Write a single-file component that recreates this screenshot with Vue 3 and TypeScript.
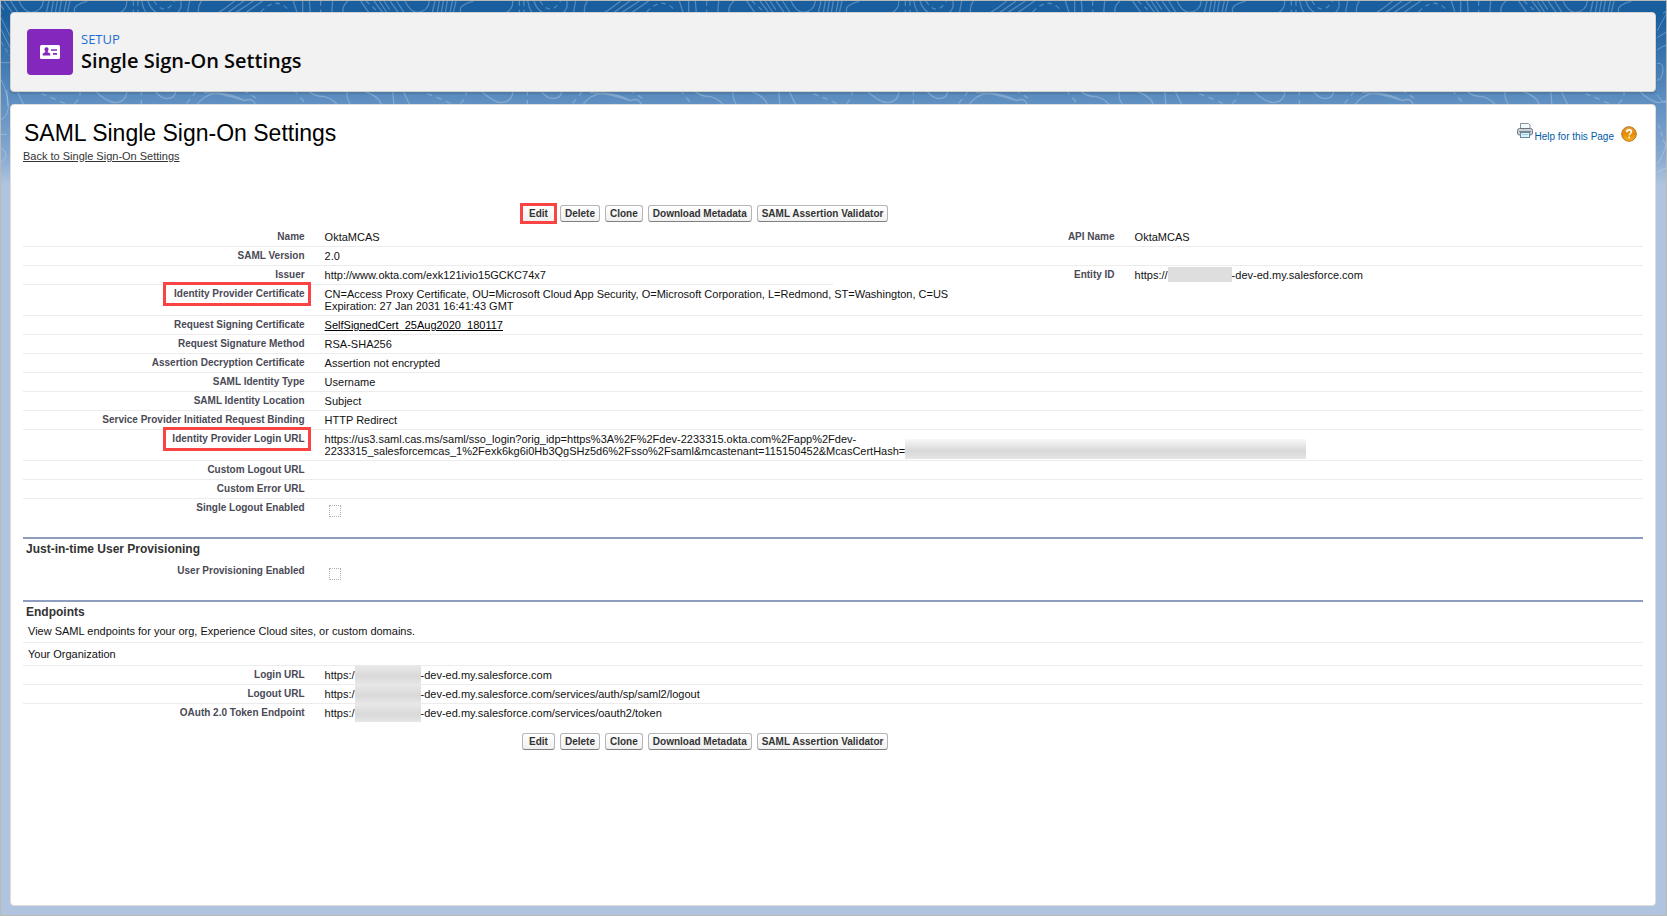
<script setup lang="ts">
interface Field {
  label: string
  text?: string
  extra?: string
  link?: boolean
  hash?: boolean
  check?: boolean
  marked?: boolean
  id?: string
  side?: { label: string; text: string; tail?: string }
  split?: boolean
}

const actions = ['Edit', 'Delete', 'Clone', 'Download Metadata', 'SAML Assertion Validator']

const settings: Field[] = [
  { label: 'Name', text: 'OktaMCAS', side: { label: 'API Name', text: 'OktaMCAS' } },
  { label: 'SAML Version', text: '2.0' },
  {
    label: 'Issuer',
    text: 'http://www.okta.com/exk121ivio15GCKC74x7',
    side: { label: 'Entity ID', text: 'https://', tail: '-dev-ed.my.salesforce.com' },
    split: true,
  },
  {
    label: 'Identity Provider Certificate',
    text: 'CN=Access Proxy Certificate, OU=Microsoft Cloud App Security, O=Microsoft Corporation, L=Redmond, ST=Washington, C=US',
    extra: 'Expiration: 27 Jan 2031 16:41:43 GMT',
    marked: true,
  },
  { label: 'Request Signing Certificate', text: 'SelfSignedCert_25Aug2020_180117', link: true },
  { label: 'Request Signature Method', text: 'RSA-SHA256' },
  { label: 'Assertion Decryption Certificate', text: 'Assertion not encrypted' },
  { label: 'SAML Identity Type', text: 'Username' },
  { label: 'SAML Identity Location', text: 'Subject' },
  { label: 'Service Provider Initiated Request Binding', text: 'HTTP Redirect' },
  {
    label: 'Identity Provider Login URL',
    text: 'https://us3.saml.cas.ms/saml/sso_login?orig_idp=https%3A%2F%2Fdev-2233315.okta.com%2Fapp%2Fdev-',
    extra: '2233315_salesforcemcas_1%2Fexk6kg6i0Hb3QgSHz5d6%2Fsso%2Fsaml&mcastenant=115150452&McasCertHash=',
    hash: true,
    marked: true,
  },
  { label: 'Custom Logout URL' },
  { label: 'Custom Error URL' },
  { label: 'Single Logout Enabled', check: true, id: 'single-logout' },
]

const endpoints = [
  { label: 'Login URL', tail: '-dev-ed.my.salesforce.com' },
  { label: 'Logout URL', tail: '-dev-ed.my.salesforce.com/services/auth/sp/saml2/logout' },
  { label: 'OAuth 2.0 Token Endpoint', tail: '-dev-ed.my.salesforce.com/services/oauth2/token' },
]
</script>

<template>
  <div class="page">
    <svg class="contours" width="100%" height="182" aria-hidden="true">
      <defs>
        <pattern id="contour" x="3" y="-1" width="386" height="182" patternUnits="userSpaceOnUse">
          <g transform="scale(.33333)" fill="none" stroke="#cfe0f2" stroke-width="4">
            <path d="M0 3L25 38M20 3L42 38M45 3Q60 36 82 37Q115 34 118 3M135 3L127 38M148 3L142 38M160 3L154 38M172 3L166 38M187 3L180 38M198 3L190 38M250 4Q200 16 214 40M368 3Q370 28 345 40M413 3Q417 25 427 40M432 3Q440 30 462 40M530 3Q536 25 518 40M557 3L550 40M592 3Q580 20 584 40M692 3Q665 25 640 40M720 3L668 40M748 3L692 40M776 3L722 40M868 3L880 40M896 3V40M916 3L919 40M986 3L983 40M1032 3Q1012 20 1018 40M1070 3L1096 40M1110 3L1138 40M1126 3L1150 40M1140 3L1158 30" />
            <path d="M388 3V40M402 3V40M450 3Q480 52 512 3M770 36Q815 -12 852 28M950 3V40M1086 3L1120 34" stroke-dasharray="14 12" />
            <path d="M8 270L12 320M38 270L62 320M270 270Q310 308 335 308Q370 304 368 270M450 270Q470 296 490 296Q516 294 515 270M574 320Q600 282 640 279Q690 284 722 302Q748 290 756 320M600 278Q640 276 722 302M910 270Q930 290 962 290Q990 298 1004 320M1030 270Q1024 298 1045 320M1070 270Q1130 288 1133 320" />
            <path d="M84 270L140 292L196 316M228 270Q232 300 200 318M412 270V320M548 310L580 270M718 270L768 302M870 270L912 320" stroke-dasharray="16 14" />
          </g>
        </pattern>
      </defs>
      <rect width="100%" height="182" fill="url(#contour)" />
    </svg>
    <svg class="edge" width="9" height="182" viewBox="0 0 27 546" aria-hidden="true">
      <path d="M0 50L27 105M0 85L27 140M0 185H27M0 235Q22 280 22 320Q18 350 0 355M0 400H18M0 440Q30 460 0 485" />
      <path d="M0 122L27 165" stroke-dasharray="14 10" />
    </svg>
    <svg class="edge east" width="9" height="182" viewBox="0 0 27 546" aria-hidden="true">
      <path d="M0 90L27 40M0 110L27 94M0 147Q15 136 27 133M0 187Q20 184 18 210Q14 238 0 238M0 280Q10 300 27 305M0 488Q20 470 27 425M0 515L27 500" />
      <path d="M4 370L27 440" stroke-dasharray="14 10" />
    </svg>

    <header class="banner">
      <span class="tile">
        <svg width="20" height="14" viewBox="0 0 20 14" aria-hidden="true">
          <rect width="20" height="14" rx="1.6" fill="#fff" />
          <path d="M6.500 2.200c1.300 0 2 .9 2 2.100 0 1-.5 1.600-.8 2.100-.2.500 0 .9.500 1.100 1.300.5 2.100.9 2.100 2v1H2.700v-1c0-1.100.8-1.500 2.100-2 .5-.2.700-.6.500-1.100-.3-.5-.8-1.100-.8-2.100 0-1.200.7-2.100 2-2.100z" fill="#8428bd" />
          <path d="M11 5h6M13 8.800h4" stroke="#8428bd" stroke-width="1.700" />
        </svg>
      </span>
      <div class="heading">
        <p class="eyebrow">SETUP</p>
        <h1>Single Sign-On Settings</h1>
      </div>
    </header>

    <main class="card">
      <div class="top">
        <div>
          <h2>SAML Single Sign-On Settings</h2>
          <a class="back" href="#">Back to Single Sign-On Settings</a>
        </div>
        <div class="help">
          <svg width="16" height="16" viewBox="0 0 16 16" aria-hidden="true">
            <path d="M3.500 6V.5h8L13 2v4" fill="#f4fbff" stroke="#86939f" />
            <rect x=".5" y="5.500" width="15" height="6.500" rx="2" fill="#cdd2d6" stroke="#6c747c" />
            <path d="M2 8.500h12" stroke="#7c858d" />
            <rect x="3.500" y="9.500" width="9" height="5" fill="#d9f2fb" stroke="#6c8798" />
            <path d="M5 11.500h6" stroke="#8fd0e8" />
          </svg>
          <a href="#">Help for this Page</a>
          <svg class="question" width="16" height="16" viewBox="0 0 16 16" aria-hidden="true">
            <defs>
              <linearGradient id="amber" x1="0" y1="0" x2="0" y2="1">
                <stop offset="0" stop-color="#e9a33a" />
                <stop offset=".5" stop-color="#e48a08" />
                <stop offset="1" stop-color="#f8b41c" />
              </linearGradient>
            </defs>
            <circle cx="8" cy="8" r="7.300" fill="url(#amber)" stroke="#b5741c" />
            <path d="M5.800 6.200c0-1.500 1-2.300 2.300-2.300s2.300.8 2.300 2c0 1.500-2.100 1.700-2.100 3.300M8.200 10.700v1.500" fill="none" stroke="#fff" stroke-width="1.600" />
          </svg>
        </div>
      </div>

      <div class="actions">
        <button v-for="a in actions" :key="a" type="button" :class="{ flagged: a === 'Edit' }">{{ a }}</button>
      </div>

      <table>
        <colgroup><col class="lab"><col class="dat"><col class="lab"><col class="dat"></colgroup>
        <tbody>
          <tr v-for="f in settings" :key="f.label" :class="{ last: f.check, split: f.split }">
            <th scope="row">
              <label v-if="f.check" :for="f.id">{{ f.label }}</label>
              <span v-else :class="{ marked: f.marked }">{{ f.label }}</span>
            </th>
            <td :colspan="f.side ? 1 : 3">
              <input v-if="f.check" :id="f.id" type="checkbox">
              <a v-else-if="f.link" href="#">{{ f.text }}</a>
              <template v-else>{{ f.text }}</template>
              <template v-if="f.extra"><br>{{ f.extra }}</template>
              <span v-if="f.hash" class="veil hash"></span>
            </td>
            <template v-if="f.side">
              <th scope="row">{{ f.side.label }}</th>
              <td>{{ f.side.text }}<template v-if="f.side.tail"><span class="veil entity"></span>{{ f.side.tail }}</template></td>
            </template>
          </tr>
        </tbody>
      </table>

      <section>
        <h3>Just-in-time User Provisioning</h3>
        <table>
          <colgroup><col class="lab"><col></colgroup>
          <tbody>
            <tr class="last">
              <th scope="row"><label for="provisioning">User Provisioning Enabled</label></th>
              <td><input id="provisioning" type="checkbox"></td>
            </tr>
          </tbody>
        </table>
      </section>

      <section>
        <h3>Endpoints</h3>
        <p class="intro">View SAML endpoints for your org, Experience Cloud sites, or custom domains.</p>
        <p class="org">Your Organization</p>
        <table>
          <colgroup><col class="lab"><col></colgroup>
          <tbody>
            <tr v-for="e in endpoints" :key="e.label">
              <th scope="row">{{ e.label }}</th>
              <td>https:/<span class="veil host"></span>{{ e.tail }}</td>
            </tr>
          </tbody>
        </table>
      </section>

      <div class="actions foot">
        <button v-for="a in actions" :key="a" type="button">{{ a }}</button>
      </div>
    </main>
  </div>
</template>

<style>
body { background: #b0c4df; }
</style>

<style scoped>
* { box-sizing: border-box; }
.page {
  position: relative;
  min-height: 100vh;
  padding: 11px 10px 9px 9px;
  border: 1px solid #b9b9b5;
  display: flex;
  flex-direction: column;
  gap: 12px;
  background: linear-gradient(#195e9e 0, #195e9e 14px, #5f8fc1 100px, #86a9d1 155px, #b0c4df 184px);
  font: 11px/12px "Liberation Sans", Arial, sans-serif;
  color: #111;
}
.contours, .edge { position: absolute; top: 0; left: 0; opacity: .32; }
.contours { clip-path: inset(0 0 77px 0); }
.edge { fill: none; stroke: #e4eefa; stroke-width: 3; }
.east { left: auto; right: 0; }
h1, h2, h3, p { margin: 0; }
.banner {
  position: relative;
  height: 80px;
  padding: 0 16px;
  border: 1px solid #d4d2d0;
  border-radius: 4px;
  background: #f2f2f2;
  box-shadow: 0 2px 2px rgba(0, 0, 0, .12);
  display: flex;
  align-items: center;
  gap: 8px;
}
.tile {
  width: 46px;
  height: 46px;
  border-radius: 4px;
  background: #8428bd;
  display: grid;
  place-items: center;
}
.heading { padding-bottom: 3px; }
.eyebrow { font: 13px/20px "Open Sans", sans-serif; color: #1b6fd0; }
h1 { font: 600 20px/24px "Open Sans", sans-serif; color: #080707; }
.card {
  position: relative;
  flex: 1;
  padding: 15px 12px;
  border: 1px solid #e0dedc;
  border-radius: 4px;
  background: #fff;
}
.top { display: flex; justify-content: space-between; }
h2 { padding: 0 1px 4px; font: 23px/26px "Liberation Sans", Arial, sans-serif; color: #000; }
.back { color: #333435; }
.help { display: flex; gap: 2px; padding: 3px 6px; }
.help a { margin-top: 8px; font-size: 10px; color: #015ba7; text-decoration: none; }
.question { margin: 3px 0 0 5px; }
.actions { display: flex; gap: 5px; padding-left: 499px; margin-top: 43px; margin-bottom: 6px; }
button {
  min-width: 33px;
  height: 17px;
  padding: 0 4px;
  border: 1px solid #b5b5b5;
  border-bottom-color: #7f7f7f;
  border-radius: 3px;
  background: linear-gradient(#fff, #f0f0f0);
  font: bold 10px/14px "Liberation Sans", Arial, sans-serif;
  color: #333;
}
.flagged { border-radius: 0; outline: 3px solid #fa4343; outline-offset: -1px; }
table { width: 100%; border-collapse: collapse; table-layout: fixed; }
.lab { width: 18%; }
.dat { width: 32%; }
th, td { padding: 3px 10px; border-bottom: 1px solid #ececec; vertical-align: top; }
th { font-size: 10px; text-align: right; color: #4a4a56; }
td { text-align: left; white-space: nowrap; }
td a { color: #000; }
.split > :nth-child(n + 3) { border-bottom: 0; }
.last > * { border-bottom: 0; }
tr:last-child > * { border-bottom: 0; }
.marked { display: inline-block; min-width: 136px; outline: 3px solid #fa4343; outline-offset: 3px; }
input {
  appearance: none;
  display: block;
  width: 12px;
  height: 12px;
  margin: 3px 4px;
  border: 1px dotted #b0b0b0;
}
section { margin-top: 14px; border-top: 2px solid #8e9dbe; }
h3 { padding: 2px 3px 5px; font: bold 12px/16px "Liberation Sans", Arial, sans-serif; color: #333; }
.intro, .org { padding: 0 5px 5px; border-bottom: 1px solid #ececec; }
.org { padding-top: 5px; }
.veil { display: inline-block; vertical-align: top; background: #dedede; }
.hash { width: 401px; height: 20px; margin: -6px 0 -2px; background: linear-gradient(#f8f8f8, #d8d8d8 60%, #e6e6e6); }
.entity { width: 64px; height: 15px; margin: -2px 0 -1px; }
.host { width: 66px; height: 19px; margin: -4px 0 -3px; background: linear-gradient(#e9e9e9, #d9d9d9 60%, #e6e6e6); }
.foot { margin: 11px 0 0; }
</style>
